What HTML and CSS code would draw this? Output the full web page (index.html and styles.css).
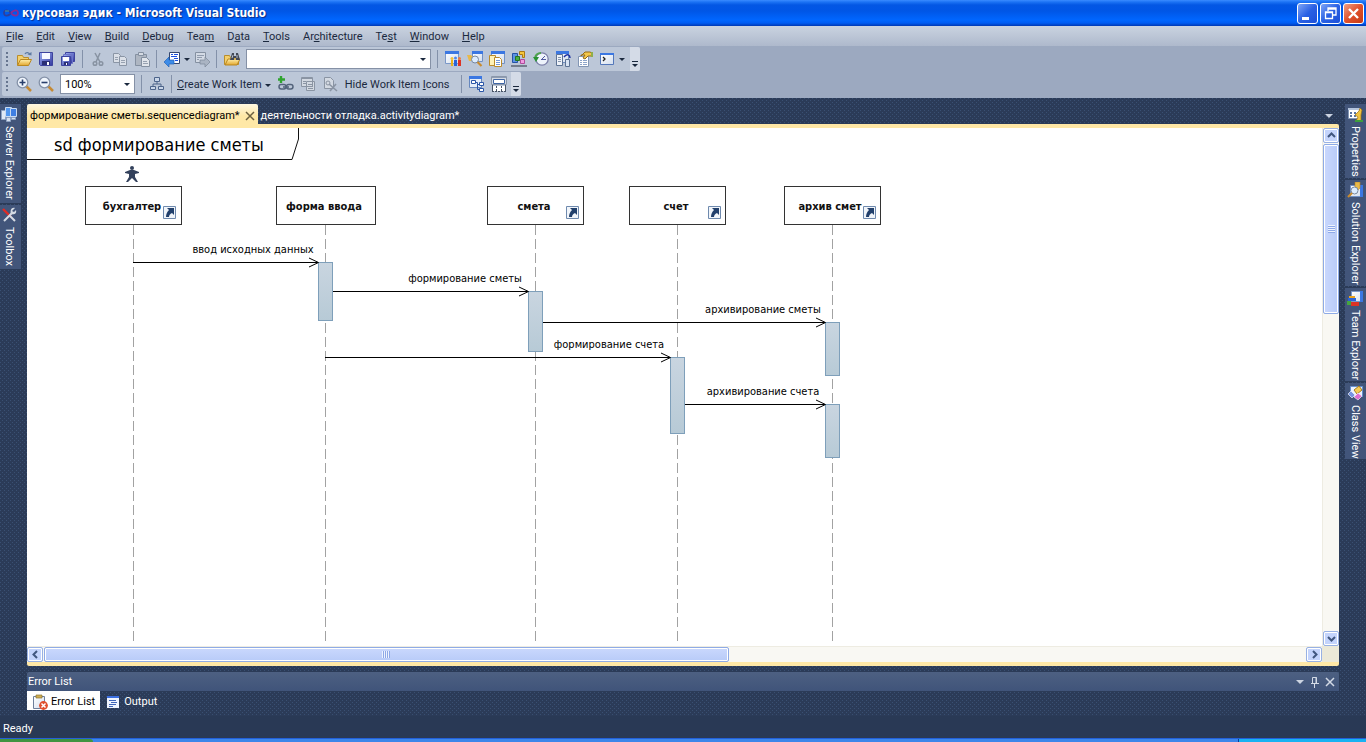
FILE: index.html
```html
<!DOCTYPE html>
<html lang="ru">
<head>
<meta charset="utf-8">
<title>курсовая эдик - Microsoft Visual Studio</title>
<link rel="stylesheet" href="styles.css">
</head>
<body>
<svg class="defs" aria-hidden="true">
  <defs>
    <linearGradient id="gBar" x1="0" y1="0" x2="0" y2="1"><stop offset="0" stop-color="#c9d5e0"/><stop offset="1" stop-color="#b7cad6"/></linearGradient>
    <linearGradient id="gPage" x1="0" y1="0" x2="1" y2="1"><stop offset="0" stop-color="#fff"/><stop offset="1" stop-color="#d3deee"/></linearGradient>
    <linearGradient id="gBlue" x1="0" y1="0" x2="1" y2="1"><stop offset="0" stop-color="#9db0f2"/><stop offset="1" stop-color="#3238a0"/></linearGradient>
    <linearGradient id="gGold" x1="0" y1="0" x2="0" y2="1"><stop offset="0" stop-color="#fff0ae"/><stop offset="1" stop-color="#e3a72e"/></linearGradient>

    <symbol id="open" viewBox="0 0 16 16"><path d="M1.500 14V4.500h5l1 2h5V9" fill="#f3cf6c" stroke="#b98d2c"/><path d="M1.500 14.500 4.500 8.500h11l-3 6z" fill="url(#gGold)" stroke="#b98720"/><path d="M9 3c1-2 4-2 5 1" fill="none" stroke="#5e7ba3" stroke-width="1.300"/><path d="m11.500 3.500 4 1V1z" fill="#5e7ba3"/></symbol>
    <symbol id="save" viewBox="0 0 16 16"><path d="M1.500 1.500h13v13h-12l-1-1z" fill="url(#gBlue)" stroke="#3d439d"/><path d="M4 2h8v6H4z" fill="#f6f8ff"/><path d="M4 10h8v4H4z" fill="#292f74"/><path d="M9 11h2v3H9z" fill="#fff"/></symbol>
    <symbol id="saveall" viewBox="0 0 16 16"><path d="M5.500 1.500h9v9h-9z" fill="url(#gBlue)" stroke="#3d439d"/><path d="M3.500 3.500h9v9h-9z" fill="url(#gBlue)" stroke="#6d74c8"/><path d="M1.500 5.500h9v9h-9z" fill="url(#gBlue)" stroke="#3d439d"/><path d="M3 6h6v4H3z" fill="#fff"/><path d="M4 11h4v3H4z" fill="#292f74"/><path d="M6 12h1v2H6z" fill="#fff"/></symbol>
    <symbol id="cut" viewBox="0 0 16 16"><g fill="none" stroke="#8893a2" stroke-width="1.500"><path d="M5 2l5 9M10 2 6 11"/><circle cx="5" cy="12.500" r="1.800"/><circle cx="11" cy="12.500" r="1.800"/></g></symbol>
    <symbol id="copy" viewBox="0 0 16 16"><g fill="#dbe0e8" stroke="#8a95a5"><path d="M1.500 2.500h5l2 2v7h-7z"/><path d="M7.500 5.500h5l2 2v7h-7z"/></g><path d="M3 6.500h3M3 8.500h3M9 9.500h4M9 11.500h4" stroke="#97a1b0"/></symbol>
    <symbol id="paste" viewBox="0 0 16 16"><path d="M1.500 3.500h11v11h-11z" fill="#aeb6c2" stroke="#8490a1"/><path d="M4.500 1.500h5v3h-5z" fill="#d6dbe3" stroke="#8490a1"/><path d="M7.500 6.500h5l3 3v6h-8z" fill="#e1e5eb" stroke="#8490a1"/><path d="M9 10.500h4M9 12.500h5" stroke="#97a1b0"/></symbol>
    <symbol id="navback" viewBox="0 0 16 16"><path d="M5.500 1.500h10v11h-10z" fill="#fff" stroke="#34466f"/><path d="M7 3.500h2M10 3.500h4M7 5.500h6M10 7.500h4M11 9.500h3" stroke="#1b50e0"/><path d="m0 11 5-5v3h5v4H5v3z" fill="#3d8ce8" stroke="#2263b8" stroke-width=".7"/></symbol>
    <symbol id="navfwd" viewBox="0 0 16 16"><path d="M1.500 1.500h10v10h-10z" fill="#d3dae5" stroke="#8490a1"/><path d="M3 4.500h7M3 6.500h5M3 8.500h2" stroke="#909bad"/><path d="m16 11-5-5v3H6v4h5v3z" fill="#aab4c3" stroke="#7c8898" stroke-width=".7"/></symbol>
    <symbol id="find" viewBox="0 0 16 16"><path d="M.500 13.500V4.500h5l1 2h8v7z" fill="#f3cf6c" stroke="#b98d2c"/><path d="m1 14 3-6h12l-3 6z" fill="url(#gGold)" stroke="#b98720"/><path d="M6 9 8 2h2v3h2V2h2l2 7h-4V7h-2v2z" fill="#424957"/><path d="M8 7 9 4M13 7V4" stroke="#b9c1cd"/></symbol>
    <symbol id="team" viewBox="0 0 16 16"><path d="M.500.500h13v12H.500z" fill="url(#gPage)" stroke="#7b98c8"/><path d="M0 0h14v3H0z" fill="#3b77e2"/><path d="M6 9h2v6H6z" fill="#e9b21d"/><circle cx="7" cy="7.500" r="1.500" fill="#f0c03c"/><path d="M9 9h3v6H9z" fill="#2964d8"/><circle cx="10.500" cy="7" r="1.500" fill="#4b86ee"/><path d="M13 9h3v6h-3z" fill="#dd3325"/><circle cx="14.500" cy="7.500" r="1.500" fill="#f07a3a"/></symbol>
    <symbol id="solution" viewBox="0 0 16 16"><path d="M5.500.500h10v10h-10z" fill="url(#gPage)" stroke="#7190c4"/><path d="M5 0h11v3H5z" fill="#3b77e2"/><path d="M0 4h4l1 1h5v5H2z" fill="#e8b94a"/><circle cx="8" cy="8.500" r="3.500" fill="#dcecff" stroke="#77879f"/><path d="m10.500 11 4 4" stroke="#c98b2e" stroke-width="2.200"/></symbol>
    <symbol id="props" viewBox="0 0 16 16"><path d="M2.500.500h13v12h-13z" fill="url(#gPage)" stroke="#7190c4"/><path d="M2 0h14v3H2z" fill="#3b77e2"/><path d="M.500 4.500h6v10h-6z" fill="#fff2b8" stroke="#ba8b2a"/><path d="M5.500 6.500h5l2 2v7h-7z" fill="#fff" stroke="#ba8b2a"/><path d="M7 9.500h4M7 11.500h4M7 13.500h4" stroke="#759ad8"/></symbol>
    <symbol id="objects" viewBox="0 0 16 16"><path d="M1.500 2.500h5v9h-5z" fill="#5b93e4" stroke="#2552a5"/><path d="M8.500.500h5v6h-2v-3h-3z" fill="#f5c63b" stroke="#a97915"/><path d="M4.500 5.500h4v4h-4z" fill="#49ae44" stroke="#267520"/><path d="M9.500 8.500h4v4h-4z" fill="#ef9ae0" stroke="#b04a9b"/><path d="M0 14h16v2H0z" fill="#737d8c"/></symbol>
    <symbol id="history" viewBox="0 0 16 16"><circle cx="9" cy="8" r="6.200" fill="#edf3fb" stroke="#7b7fa8" stroke-width="1.300"/><path d="M9 8l3-3M8 8.500h5" stroke="#5058a0" fill="none"/><path d="M2.500 8C1.500 4 5 2 8 2" stroke="#4fa34f" stroke-width="2" fill="none"/><path d="M0 6h6l-3 5z" fill="#299334"/></symbol>
    <symbol id="servers" viewBox="0 0 16 16"><path d="M1.500.500h12v11h-12z" fill="url(#gPage)" stroke="#7190c4"/><path d="M1 0h13v3H1z" fill="#3b77e2"/><path d="M1.500 3.500h6v11h-6z" fill="#eef2f8" stroke="#5d7395"/><path d="M3 6.500h3M3 8.500h3M3 10.500h3" stroke="#8494ac"/><path d="M10.500 8.500h4v7h-4z" fill="#d8e4f4" stroke="#5d7395"/><path d="M9 6c3-4 6-2 6 1" stroke="#1b2f9e" stroke-width="1.500" fill="none"/></symbol>
    <symbol id="property" viewBox="0 0 16 16"><path d="M1.500 5.500h10v10h-10z" fill="#fff" stroke="#8296b4"/><path d="M3 9.500h2M6 9.500h4M3 11.500h2M6 11.500h4M3 13.500h2M6 13.500h4" stroke="#8da5ca"/><path d="m4 5 4-4h5l2 1v3h-4l-3 3-2-1 2-3H4z" fill="#f2c64b" stroke="#946a16"/><path d="M14 1h2v5h-2z" fill="#8fae4a"/></symbol>
    <symbol id="command" viewBox="0 0 16 16"><path d="M1.500 2.500h13v11h-13z" fill="url(#gPage)" stroke="#5478ba"/><path d="M1 2h14v2H1z" fill="#3b77e2"/><path d="m4 6 2 2-2 2" fill="none" stroke="#222" stroke-width="1.300"/></symbol>

    <symbol id="zoomin" viewBox="0 0 16 16"><path d="m10 10 5 5" stroke="#c58a34" stroke-width="2.500"/><circle cx="6.500" cy="6.500" r="5.300" fill="#eff5fc" stroke="#8592a8" stroke-width="1.300"/><path d="M3.500 6.500h6M6.500 3.500v6" stroke="#283f6c" stroke-width="1.600"/></symbol>
    <symbol id="zoomout" viewBox="0 0 16 16"><path d="m10 10 5 5" stroke="#c58a34" stroke-width="2.500"/><circle cx="6.500" cy="6.500" r="5.300" fill="#eff5fc" stroke="#8592a8" stroke-width="1.300"/><path d="M3.500 6.500h6" stroke="#283f6c" stroke-width="1.600"/></symbol>
    <symbol id="tree" viewBox="0 0 16 16"><g fill="#c9d6e8" stroke="#4d648a"><path d="M5.500 1.500h5v4h-5zM1.500 10.500h5v3h-5zM9.500 10.500h5v3h-5z"/><path d="M8 6v2M4 10V8h8v2" fill="none"/></g></symbol>
    <symbol id="link" viewBox="0 0 16 16"><path d="M3 0v7M0 3.500h7" stroke="#2fa42f" stroke-width="2.400"/><rect x="1" y="8.500" width="7" height="4.500" rx="2.200" fill="none" stroke="#53637b" stroke-width="1.500"/><rect x="8.500" y="8.500" width="6.500" height="4.500" rx="2.200" fill="none" stroke="#53637b" stroke-width="1.500"/><path d="M5 11h6" stroke="#53637b" stroke-width="1.500"/></symbol>
    <symbol id="report" viewBox="0 0 16 16"><path d="M1.500 1.500h11v9h-11zM6.500 5.500h8v9h-8z" fill="#d3d9e2" stroke="#8a94a3"/><path d="M2 2.500h10M8 8.500h5M8 10.500h5M8 12.500h5M3 5.500h3M3 7.500h3" stroke="#8a94a3"/></symbol>
    <symbol id="unlink" viewBox="0 0 16 16"><path d="M2.500 1.500h6l3 3v8h-9z" fill="#d3d9e2" stroke="#8a94a3"/><circle cx="6" cy="7" r="2" fill="none" stroke="#8a94a3"/><path d="m7 8 8 7M14 8l-6 7" stroke="#8a94a3" stroke-width="1.600"/></symbol>
    <symbol id="layout" viewBox="0 0 16 16"><path d="M.500.500h12v11H.500z" fill="#e4edf9" stroke="#6687bd"/><path d="M0 0h13v3H0z" fill="#3b77e2"/><path d="M2.500 4.500h4v3h-4zM10.500 6.500h4v3h-4zM10.500 12.500h4v3h-4z" fill="#fff" stroke="#2b57a8"/><path d="M7 6.500h1.500v7H10M8.500 8.500h2" stroke="#2b57a8" fill="none"/></symbol>
    <symbol id="sections" viewBox="0 0 16 16"><path d="M.500.500h15v8H.500z" fill="#d5dbe4" stroke="#8a97aa"/><path d="M1 1h14v1H1z" fill="#8f9db3"/><path d="M2.500 3.500h11v4h-11z" fill="#fff" stroke="#4066a5"/><path d="M1 10h14v5H1z" fill="#fff"/><path d="M1.500 9v6M14.500 9v6" stroke="#485466"/><path d="M1 15.500h14M5.500 10v5M10.500 10v5" stroke="#485466" stroke-dasharray="2 1"/></symbol>

    <symbol id="server" viewBox="0 0 16 16"><path d="M.500 4.500h4v9h-4z" fill="#dfe9f5" stroke="#8ea3c3"/><path d="M4.500 1.500h6v9h-6z" fill="#5297ee" stroke="#c9dbf2"/><path d="M9.500 2.500h6v8h-6z" fill="#3f7fe2" stroke="#c9dbf2"/><path d="M5.500 11.500h4v4h-4zM10.500 11.500h4v2h-4z" fill="#d5e0ef" stroke="#8ea3c3"/></symbol>
    <symbol id="toolbox" viewBox="0 0 16 16"><path d="m2 2 8 8" stroke="#e02c25" stroke-width="2.400"/><path d="m9 9 5 5M3 14l8-8" stroke="#d5dbe4" stroke-width="2"/><path d="M14 1c-4-1-5 3-4 6 3 1 6 0 5-4l-2 2-2-1z" fill="#d5dbe4"/></symbol>
    <symbol id="propwin" viewBox="0 0 16 16"><path d="M1.500 2.500h11v10h-11z" fill="#fff" stroke="#8297b5"/><path d="M1 2h12v2H1z" fill="#b5c5dd"/><path d="M3 6h2v2H3zM7 6h2v2H7zM3 9h2v2H3zM7 9h2v2H7z" fill="#5874a2"/><path d="m8 9 4-4 1-3 2 2-1 5v6H9l2-4z" fill="#f0c342" stroke="#9a7016" stroke-width=".7"/><path d="M8 14h8v2H8z" fill="#3e9e3d"/></symbol>
    <symbol id="solwin" viewBox="0 0 16 16"><path d="M3.500 3.500h11v11h-11z" fill="url(#gPage)" stroke="#7190c4"/><path d="M13 3h3v12h-3z" fill="#3b77e2"/><path d="M8 0h5v6l-2 2-3-1z" fill="#e8b94a" stroke="#b88526" stroke-width=".6"/><circle cx="7.500" cy="8.500" r="3.500" fill="#dcecff" stroke="#77879f"/><path d="m5 11-4 4" stroke="#c98b2e" stroke-width="2.200"/></symbol>
    <symbol id="teamwin" viewBox="0 0 16 16"><path d="M4.500 1.500h11v10h-11z" fill="url(#gPage)" stroke="#7b98c8"/><path d="M13 1h3v11h-3z" fill="#3b77e2"/><path d="M2 6h6v2H2z" fill="#e9a21d"/><path d="M1 8h8v3H1z" fill="#2964d8"/><path d="M0 11h4v4H0z" fill="#46a43f"/><path d="M4 12h8v4H4z" fill="#dd3325"/></symbol>
    <symbol id="classwin" viewBox="0 0 16 16"><path d="M3.500 1.500h12v10h-12z" fill="#eaf2ff" stroke="#658fce"/><path d="m7 5 5-4 3 4-5 4z" fill="#f5cb55" stroke="#a87c1e"/><path d="m1 9 3-3 4 4-3 3z" fill="#7794e2" stroke="#fff" stroke-width=".6"/><path d="m7 12 4-4 4 3-4 4z" fill="#dc6fd0" stroke="#fff" stroke-width=".6"/></symbol>
    <symbol id="errors" viewBox="0 0 16 16"><path d="M1.500 2.500h11v12h-11z" fill="url(#gPage)" stroke="#6d7f9b"/><path d="M4 1h6v3H4z" fill="#cfae52" stroke="#8b7330" stroke-width=".7"/><circle cx="11.500" cy="11.500" r="4.400" fill="#e04f2d"/><path d="m9.500 9.500 4 4m0-4-4 4" stroke="#fff" stroke-width="1.500"/></symbol>
    <symbol id="output" viewBox="0 0 16 16"><path d="M2 2h12v12H2z" fill="#eef4ff"/><path d="M2 2h12v2H2z" fill="#3b6fe0"/><path d="M4 6.500h7M6 8.500h6M4 10.500h7M4 12.500h4" stroke="#4066b8"/></symbol>
    <symbol id="shortcut" viewBox="0 0 13 13"><path d="M.500.500h12v12H.500z" fill="#f1f5fa" stroke="#6f8aae"/><path d="M4 2h7v7L9 7c-2 1-3 2-3 4H3c0-3 1-5 3-7z" fill="#22406c"/></symbol>
    <symbol id="arrow" viewBox="0 0 11 15"><path d="M1 3 10.500 7.500 1 12" fill="none" stroke="#000"/></symbol>
  </defs>
</svg>

<header class="titlebar">
  <svg class="logo" viewBox="0 0 16 10" aria-hidden="true"><path d="M8 5C6 2 1 1 1 5s5 3 7 0" fill="none" stroke="#2d3f9c" stroke-width="1.800"/><path d="M8 5c2-3 7-4 7 0s-5 3-7 0" fill="none" stroke="#8b2c93" stroke-width="1.800"/><path d="M2 3h4" stroke="#4b9f9d"/></svg>
  <h1 class="caption">курсовая эдик - Microsoft Visual Studio</h1>
  <div class="window-buttons">
    <button class="winbtn" aria-label="Minimize"><svg viewBox="0 0 19 19"><path d="M4 13h7v3H4z" fill="#fff"/></svg></button>
    <button class="winbtn" aria-label="Restore"><svg viewBox="0 0 19 19"><path d="M7 7V4h8v7h-3M7 5h8" fill="none" stroke="#fff" stroke-width="1.300"/><path d="M4.500 8h7v6.500h-7zM4 8.500h8" fill="none" stroke="#fff" stroke-width="1.300"/></svg></button>
    <button class="winbtn winbtn-close" aria-label="Close"><svg viewBox="0 0 19 19"><path d="m5 5 9 9M14 5l-9 9" stroke="#fff" stroke-width="2.400"/></svg></button>
  </div>
</header>

<nav class="menubar">
  <button><u>F</u>ile</button><button><u>E</u>dit</button><button><u>V</u>iew</button><button><u>B</u>uild</button><button><u>D</u>ebug</button><button>Tea<u>m</u></button><button>D<u>a</u>ta</button><button><u>T</u>ools</button><button>Ar<u>c</u>hitecture</button><button>Te<u>s</u>t</button><button><u>W</u>indow</button><button><u>H</u>elp</button>
</nav>

<section class="toolbars">
  <div class="toolbar">
    <span class="grip"></span>
    <button class="tool" aria-label="Open"><svg><use href="#open"/></svg></button>
    <button class="tool" aria-label="Save"><svg><use href="#save"/></svg></button>
    <button class="tool" aria-label="Save All"><svg><use href="#saveall"/></svg></button>
    <span class="sep"></span>
    <button class="tool" aria-label="Cut"><svg><use href="#cut"/></svg></button>
    <button class="tool" aria-label="Copy"><svg><use href="#copy"/></svg></button>
    <button class="tool" aria-label="Paste"><svg><use href="#paste"/></svg></button>
    <span class="sep"></span>
    <button class="tool" aria-label="Navigate Backward"><svg><use href="#navback"/></svg></button>
    <button class="drop drop-narrow" aria-label="Navigation history"></button>
    <button class="tool" aria-label="Navigate Forward"><svg><use href="#navfwd"/></svg></button>
    <span class="sep"></span>
    <button class="tool" aria-label="Find in Files"><svg><use href="#find"/></svg></button>
    <span class="combo combo-find"><select aria-label="Find"><option></option></select></span>
    <span class="sep"></span>
    <button class="tool" aria-label="Team Explorer"><svg><use href="#team"/></svg></button>
    <button class="tool" aria-label="Solution Explorer"><svg><use href="#solution"/></svg></button>
    <button class="tool" aria-label="Properties Window"><svg><use href="#props"/></svg></button>
    <button class="tool" aria-label="Object Browser"><svg><use href="#objects"/></svg></button>
    <button class="tool" aria-label="Start Page"><svg><use href="#history"/></svg></button>
    <button class="tool" aria-label="Server Explorer"><svg><use href="#servers"/></svg></button>
    <button class="tool" aria-label="Property Manager"><svg><use href="#property"/></svg></button>
    <button class="tool" aria-label="Command Window"><svg><use href="#command"/></svg></button>
    <button class="drop drop-narrow" aria-label="Other Windows"></button>
    <button class="overflow" aria-label="Toolbar Options"></button>
  </div>
  <div class="toolbar">
    <span class="grip"></span>
    <button class="tool" aria-label="Zoom In"><svg><use href="#zoomin"/></svg></button>
    <button class="tool" aria-label="Zoom Out"><svg><use href="#zoomout"/></svg></button>
    <span class="combo combo-zoom"><select aria-label="Zoom"><option>100%</option></select></span>
    <span class="sep"></span>
    <button class="tool" aria-label="Layout"><svg><use href="#tree"/></svg></button>
    <span class="sep"></span>
    <button class="textbtn textbtn-drop"><span><u>C</u>reate Work Item</span></button>
    <button class="tool" aria-label="Link to Work Item"><svg><use href="#link"/></svg></button>
    <button class="tool" aria-label="View Work Items"><svg><use href="#report"/></svg></button>
    <button class="tool" aria-label="Remove Work Items"><svg><use href="#unlink"/></svg></button>
    <button class="textbtn"><span>Hide Work Item <u>I</u>cons</span></button>
    <span class="sep"></span>
    <button class="tool" aria-label="Rearrange Layout"><svg><use href="#layout"/></svg></button>
    <button class="tool" aria-label="Validate Sequence"><svg><use href="#sections"/></svg></button>
    <button class="overflow" aria-label="Toolbar Options"></button>
  </div>
</section>

<div class="workspace">
  <aside class="rail rail-left">
    <button class="railtab"><svg><use href="#server"/></svg>Server Explorer</button>
    <button class="railtab"><svg><use href="#toolbox"/></svg>Toolbox</button>
  </aside>

  <div class="center">
    <div class="doctabs">
      <div class="doctab doctab-active"><button class="tabname">формирование сметы.sequencediagram*</button><button class="tabclose" aria-label="Close"><svg viewBox="0 0 10 10"><path d="m1 1 8 8M9 1 1 9" stroke="#6d6140" stroke-width="1.500"/></svg></button></div>
      <div class="doctab"><button class="tabname">деятельности отладка.activitydiagram*</button></div>
      <button class="drop drop-light doclist" aria-label="Active Files"></button>
    </div>

    <main class="document">
      <div class="canvas">
        <svg class="diagram" width="1295" height="518" role="img" aria-label="Sequence diagram">
          <path d="M0 31.500H265L271.500 11V0" fill="none" stroke="#111"/>
          <text class="frame-name" x="27" y="23">sd формирование сметы</text>
          <g fill="#33415c"><circle cx="105" cy="40" r="2"/><path d="m98 44 5-2h4l5 2v1l-4 1v3l3 5h-2l-4-4-4 4h-2l3-5v-3l-4-1z"/></g>
          <g class="lifelines"><path d="M106.500 97v418M298.500 97v418M508.500 97v418M650.500 97v418M805.500 97v418"/></g>
          <g class="heads">
            <rect x="58.500" y="58.500" width="96" height="38"/><rect x="249.500" y="58.500" width="99" height="38"/><rect x="460.500" y="58.500" width="96" height="38"/><rect x="602.500" y="58.500" width="96" height="38"/><rect x="757.500" y="58.500" width="96" height="38"/>
          </g>
          <g class="head-names">
            <text x="105" y="82">бухгалтер</text><text x="297" y="82">форма ввода</text><text x="507" y="82">смета</text><text x="649" y="82">счет</text><text x="803" y="82">архив смет</text>
          </g>
          <use href="#shortcut" x="136" y="78" width="13" height="13"/><use href="#shortcut" x="539" y="78" width="13" height="13"/><use href="#shortcut" x="681" y="78" width="13" height="13"/><use href="#shortcut" x="836" y="78" width="13" height="13"/>
          <g class="bars">
            <rect x="291.500" y="134.500" width="14" height="58"/><rect x="501.500" y="163.500" width="14" height="60"/><rect x="643.500" y="229.500" width="14" height="76"/><rect x="798.500" y="194.500" width="14" height="53"/><rect x="798.500" y="276.500" width="14" height="53"/>
          </g>
          <path d="M106 134.500h185M306 163.500h195M516 194.500h282M298 229.500h345M658 276.500h140" stroke="#000"/>
          <use href="#arrow" x="281" y="127" width="11" height="15"/><use href="#arrow" x="491" y="156" width="11" height="15"/><use href="#arrow" x="788" y="187" width="11" height="15"/><use href="#arrow" x="633" y="222" width="11" height="15"/><use href="#arrow" x="788" y="269" width="11" height="15"/>
          <g class="messages">
            <text x="226" y="125">ввод исходных данных</text><text x="438" y="154">формирование сметы</text><text x="736" y="185">архивирование сметы</text><text x="582" y="220">формирование счета</text><text x="736" y="267">архивирование счета</text>
          </g>
        </svg>
      </div>
      <div class="scroll scroll-v">
        <button class="scrollbtn" aria-label="Scroll up"><svg viewBox="0 0 9 9"><path d="m1 6 3.500-3.500L8 6"/></svg></button>
        <div class="track"><div class="thumb thumb-v"><span class="ridges"></span></div></div>
        <button class="scrollbtn" aria-label="Scroll down"><svg viewBox="0 0 9 9"><path d="m1 3 3.500 3.500L8 3"/></svg></button>
      </div>
      <div class="scroll scroll-h">
        <button class="scrollbtn" aria-label="Scroll left"><svg viewBox="0 0 9 9"><path d="M6 1 2.500 4.500 6 8"/></svg></button>
        <div class="track"><div class="thumb thumb-h"><span class="ridges"></span></div></div>
        <button class="scrollbtn" aria-label="Scroll right"><svg viewBox="0 0 9 9"><path d="m3 1 3.500 3.500L3 8"/></svg></button>
      </div>
      <div class="corner"></div>
    </main>

    <section class="panel">
      <h2 class="panel-title">Error List</h2>
      <button class="drop drop-light" aria-label="Window Position"></button>
      <button class="panelbtn" aria-label="Auto Hide"><svg viewBox="0 0 10 12"><path d="M2.500 7V1.500h4V7M6 1v6M1 7.500h8M4.500 8v4" fill="none" stroke="#d3dae6"/></svg></button>
      <button class="panelbtn" aria-label="Close"><svg viewBox="0 0 10 12"><path d="m1 2 8 8M9 2l-8 8" stroke="#d3dae6" stroke-width="1.500"/></svg></button>
    </section>
    <div class="paneltabs">
      <button class="paneltab paneltab-active"><svg><use href="#errors"/></svg>Error List</button>
      <button class="paneltab"><svg><use href="#output"/></svg>Output</button>
    </div>
  </div>

  <aside class="rail rail-right">
    <button class="railtab"><svg><use href="#propwin"/></svg>Properties</button>
    <button class="railtab"><svg><use href="#solwin"/></svg>Solution Explorer</button>
    <button class="railtab"><svg><use href="#teamwin"/></svg>Team Explorer</button>
    <button class="railtab"><svg><use href="#classwin"/></svg>Class View</button>
  </aside>
</div>

<footer class="status">Ready</footer>
<div class="taskbar"><span class="start"></span><span class="tasks"></span><span class="tray"></span></div>
</body>
</html>
```

FILE: styles.css
```css
* { box-sizing: border-box; }

body {
  margin: 0;
  height: 100vh;
  display: flex;
  flex-direction: column;
  overflow: hidden;
  font: 11px/14px Roboto, "DejaVu Sans Condensed", sans-serif;
  color: #1b293e;
  background-color: #2b3c59;
}

button, select {
  font: inherit;
  color: inherit;
  margin: 0;
  padding: 0;
  border: 0;
  background: none;
  appearance: none;
}

button { flex: none; white-space: nowrap; }
svg { display: block; flex: none; }
.defs { position: absolute; width: 0; height: 0; }

/* title bar */
.titlebar {
  flex: none;
  display: flex;
  align-items: center;
  height: 26px;
  padding: 0 2px 0 3px;
  background: linear-gradient(#3a8cff 0, #1c73f4 2px, #0357e4 5px, #0056e6 11px, #0066ff 20px, #005cf2 23px, #0038b4 26px);
}
.logo { width: 16px; height: 10px; }
.caption {
  flex: 1;
  margin: 0 0 0 3px;
  font: bold 12px/20px "DejaVu Sans Condensed", sans-serif;
  color: #fff;
  text-shadow: 1px 1px 1px #0b2a86;
}
.window-buttons { display: flex; gap: 2px; }
.winbtn {
  width: 21px;
  height: 21px;
  border: 1px solid #fff;
  border-radius: 3px;
  background: linear-gradient(135deg, #7fa6f7, #2a61e4 50%, #1c4fd8);
}
.winbtn svg { width: 19px; height: 19px; }
.winbtn-close { background: linear-gradient(135deg, #f0a084, #e0512c 50%, #c53a14); }

/* menu */
.menubar {
  flex: none;
  display: flex;
  align-items: center;
  gap: 13px;
  height: 20px;
  padding: 1px 6px 0;
  background: linear-gradient(#cad3e0, #aeb9cc);
}

/* toolbars */
.toolbars {
  flex: none;
  display: flex;
  flex-direction: column;
  align-items: flex-start;
  gap: 1px;
  padding: 1px 2px 2px;
  background: #9ca9c0;
}
.toolbar {
  display: flex;
  align-items: center;
  height: 24px;
  padding-left: 4px;
  border-radius: 2px;
  background: #bcc7d8;
}
.grip {
  width: 3px;
  height: 14px;
  margin-right: 4px;
  background: repeating-linear-gradient(#66758f 0 2px, transparent 2px 4px);
  border-right: 1px solid #bcc7d8;
}
.tool { width: 22px; height: 22px; padding: 3px; }
.tool svg { width: 16px; height: 16px; }
.sep { width: 5px; height: 18px; margin-left: 3px; border-left: 1px solid #8391a9; }
.drop { width: 10px; height: 16px; display: grid; place-items: center; }
.drop-narrow { width: 8px; }
.drop::after, .combo::after, .textbtn-drop::after {
  content: "";
  border: 3px solid transparent;
  border-top-color: #1b293e;
  border-bottom: 0;
}
.drop-light::after { border-width: 4px 4px 0; border-top-color: #ccd4e1; }
.overflow {
  width: 10px;
  height: 24px;
  margin-left: 4px;
  display: flex;
  flex-direction: column;
  align-items: center;
  justify-content: flex-end;
  gap: 2px;
  padding-bottom: 4px;
  border-radius: 0 2px 2px 0;
  background: #d4dbe7;
}
.tool + .overflow { margin-left: 1px; }
.overflow::before { content: ""; width: 6px; height: 1px; background: #1b293e; }
.overflow::after { content: ""; border: 3px solid transparent; border-top-color: #1b293e; border-bottom: 0; }
.combo {
  display: grid;
  grid-template-columns: 1fr 12px;
  align-items: center;
  height: 20px;
  border: 1px solid #8591a6;
  background: #fff;
  color: #000;
}
.combo select { grid-area: 1 / 1 / 2 / 3; width: 100%; height: 18px; padding: 1px 0 0 4px; }
.combo::after { grid-area: 1 / 2; justify-self: center; margin-right: 2px; pointer-events: none; }
.combo-find { width: 185px; margin: 0 3px; }
.combo-zoom { width: 75px; margin: 0 3px; }
.textbtn { display: flex; align-items: center; gap: 3px; padding: 2px 4px 0; }
.textbtn-drop { padding-left: 1px; }
.textbtn + .sep { margin-left: 7px; }

/* dark shell */
.workspace {
  flex: 1;
  min-height: 0;
  display: flex;
  gap: 6px;
  padding-top: 6px;
  background-color: #2b3b58;
  background-image: conic-gradient(from 270deg at 1px 1px, #3a5072 90deg, transparent 0), conic-gradient(from 270deg at 1px 1px, #3a5072 90deg, transparent 0);
  background-size: 4px 4px;
  background-position: 0 0, 2px 2px;
}
.rail { flex: none; display: flex; flex-direction: column; gap: 2px; width: 21px; }
.railtab {
  display: flex;
  align-items: center;
  gap: 4px;
  width: 100%;
  padding: 2px 1px 1px 0;
  writing-mode: vertical-rl;
  color: #fff;
  background: #42557a;
}
.railtab svg { width: 16px; height: 16px; }
.rail-left .railtab { padding: 2px 4px 3px 0; }

.center { flex: 1; min-width: 0; display: flex; flex-direction: column; }
.doctabs { flex: none; display: flex; height: 20px; color: #fff; }
.doctab { display: flex; align-items: center; gap: 5px; padding: 3px 3px 0; }
.doctab-active { border-radius: 2px 2px 0 0; color: #000; background: linear-gradient(#fff8e2, #ffe8a6 60%); }
.tabclose svg { width: 10px; height: 10px; }
.doclist { margin: 4px 5px 0 auto; }

.document {
  flex: 1;
  min-height: 0;
  display: grid;
  grid-template: minmax(0, 1fr) 16px / minmax(0, 1fr) 17px;
  padding: 4px 0;
  border-radius: 0 2px 2px 2px;
  background: #ffe8a6;
}
.canvas { overflow: hidden; background: #fff; font-family: "DejaVu Sans Condensed", sans-serif; }
.corner { background: #ece9d8; }
.frame-name { font-size: 18px; }
.head-names { font-weight: bold; text-anchor: middle; fill: #111; }
.messages { text-anchor: middle; fill: #000; }
.heads { fill: #fff; stroke: #333; }
.lifelines { stroke: #a2a2a2; stroke-dasharray: 10 4; }
.bars { fill: url(#gBar); stroke: #7e9fba; }

.scroll { display: flex; background: #f9f8f3; }
.scroll-v { flex-direction: column; border-left: 1px solid #eeece2; }
.scroll-h { border-top: 1px solid #eeece2; }
.track { flex: 1; min-width: 0; min-height: 0; display: flex; padding: 0 1px; }
.scroll-v .track { flex-direction: column; padding: 1px 0; }
.scrollbtn {
  display: grid;
  place-items: center;
  width: 16px;
  height: 15px;
  border: 1px solid #98b1e4;
  border-radius: 2px;
  box-shadow: inset 0 0 0 1px #fff;
  background: #c4d4fc;
}
.scrollbtn svg { width: 9px; height: 9px; fill: none; stroke: #41577f; stroke-width: 2; }
.thumb { display: grid; place-items: center; border: 1px solid #8fabe6; border-radius: 2px; box-shadow: inset 0 0 0 1px #fff; }
.thumb-v { height: 35%; background: linear-gradient(90deg, #cad8fd, #b8cbf8); }
.thumb-h { width: 54.3%; background: linear-gradient(#cad8fd, #b8cbf8); }
.ridges { width: 8px; height: 7px; background: repeating-linear-gradient(90deg, #eef3fe 0 1px, #8ea9e8 1px 2px); }
.thumb-v .ridges { width: 7px; height: 8px; background: repeating-linear-gradient(#eef3fe 0 1px, #8ea9e8 1px 2px); }

.panel {
  flex: none;
  display: flex;
  align-items: center;
  gap: 5px;
  height: 19px;
  margin-top: 6px;
  padding: 0 4px 0 1px;
  border-radius: 2px 2px 0 0;
  color: #fff;
  background: linear-gradient(#4d6082, #40547a);
}
.panel-title { flex: 1; margin: 0; padding-top: 1px; font: inherit; }
.panelbtn svg { width: 10px; height: 12px; }
.paneltabs { flex: none; display: flex; height: 25px; padding-bottom: 6px; color: #fff; }
.paneltab { display: flex; align-items: center; gap: 3px; padding: 2px 5px 0; }
.paneltab svg { width: 16px; height: 16px; }
.paneltab-active { color: #000; background: #fff; }

.status { flex: none; height: 22px; padding: 6px 3px 0; color: #fff; background: #293955; }
.taskbar { flex: none; display: flex; height: 4px; border-top: 1px solid #2360d8; background: #3c86ea; }
.start { width: 93px; border-radius: 0 3px 0 0; background: #409440; }
.tasks { flex: 1; }
.tray { width: 128px; border-left: 1px solid #0b3a9c; background: #19b2f2; }
```
